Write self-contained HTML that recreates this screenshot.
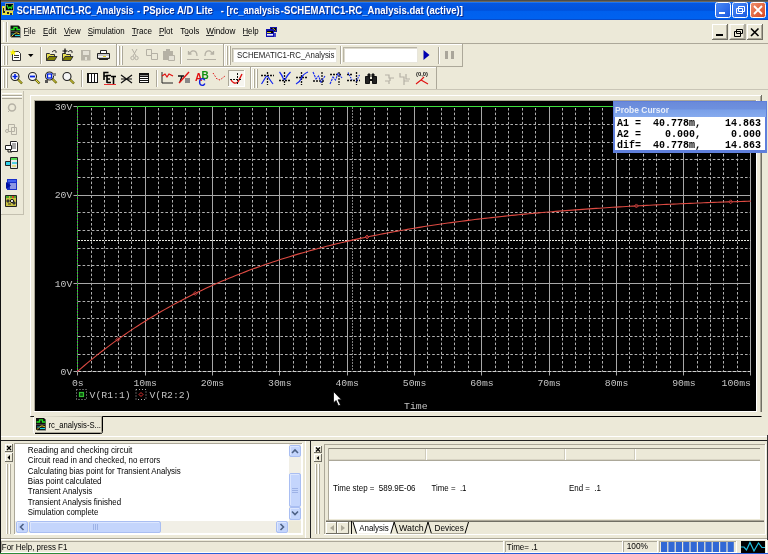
<!DOCTYPE html>
<html><head><meta charset="utf-8"><title>PSpice A/D Lite</title>
<style>html,body{margin:0;padding:0;background:#ECE9D8;overflow:hidden;width:768px;height:554px} svg{display:block;will-change:transform}</style>
</head><body>
<svg width="768" height="554" viewBox="0 0 768 554">
<rect x="0" y="0" width="768" height="554" fill="#ECE9D8" />
<rect x="0" y="0" width="768" height="1" fill="#4C4C4A" />
<rect x="0" y="1" width="768" height="1" fill="#6E665C" />
<defs>
<linearGradient id="tg" x1="0" y1="0" x2="0" y2="1">
<stop offset="0" stop-color="#3088F8"/><stop offset="0.07" stop-color="#0456E2"/>
<stop offset="0.46" stop-color="#0052DC"/><stop offset="0.52" stop-color="#0060EE"/><stop offset="0.92" stop-color="#0062F0"/><stop offset="1" stop-color="#0A40B8"/>
</linearGradient>
<linearGradient id="btn" x1="0" y1="0" x2="1" y2="1">
<stop offset="0" stop-color="#4A8AF6"/><stop offset="1" stop-color="#1A58E0"/></linearGradient>
<linearGradient id="cbtn" x1="0" y1="0" x2="1" y2="1">
<stop offset="0" stop-color="#F0916E"/><stop offset="1" stop-color="#D7451F"/></linearGradient>
<linearGradient id="pc" x1="0" y1="0" x2="0" y2="1">
<stop offset="0" stop-color="#6A8ADA"/><stop offset="0.45" stop-color="#6E90DE"/><stop offset="0.55" stop-color="#7AA0E8"/><stop offset="1" stop-color="#86AAEE"/></linearGradient>
</defs>
<rect x="0" y="2" width="768" height="18" fill="url(#tg)" />
<rect x="0" y="0" width="1" height="554" fill="#111"/>
<rect x="2" y="11" width="11" height="4" fill="#E8E040" />
<rect x="3" y="11" width="2" height="2" fill="#222" />
<rect x="7" y="12" width="2" height="2" fill="#222" />
<rect x="10" y="13" width="2" height="2" fill="#333" />
<rect x="2" y="6" width="3" height="5" fill="#E8E040" />
<rect x="3" y="8" width="1" height="3" fill="#222" />
<rect x="5" y="3" width="9" height="8" fill="#9A9A9A" />
<rect x="6" y="4" width="7" height="6" fill="#000" />
<path d="M7 5 L8.5 8.5 L10 7 L11.5 8.5 L12.5 5" stroke="#22E022" stroke-width="1.2" fill="none"/>
<text x="17.8" y="15.1" font-family="Liberation Sans" font-size="11" font-weight="bold" fill="#0A2A8C" textLength="116.85" lengthAdjust="spacingAndGlyphs"  xml:space="preserve">SCHEMATIC1-RC_Analysis</text>
<text x="16.8" y="14.1" font-family="Liberation Sans" font-size="11" font-weight="bold" fill="#FFF" textLength="116.85" lengthAdjust="spacingAndGlyphs"  xml:space="preserve">SCHEMATIC1-RC_Analysis</text>
<text x="138.1" y="15.1" font-family="Liberation Sans" font-size="11" font-weight="bold" fill="#0A2A8C" textLength="75.8" lengthAdjust="spacingAndGlyphs"  xml:space="preserve">- PSpice A/D Lite</text>
<text x="137.1" y="14.1" font-family="Liberation Sans" font-size="11" font-weight="bold" fill="#FFF" textLength="75.8" lengthAdjust="spacingAndGlyphs"  xml:space="preserve">- PSpice A/D Lite</text>
<text x="221.85" y="15.1" font-family="Liberation Sans" font-size="11" font-weight="bold" fill="#0A2A8C" textLength="59.05" lengthAdjust="spacingAndGlyphs"  xml:space="preserve">- [rc_analysis</text>
<text x="220.85" y="14.1" font-family="Liberation Sans" font-size="11" font-weight="bold" fill="#FFF" textLength="59.05" lengthAdjust="spacingAndGlyphs"  xml:space="preserve">- [rc_analysis</text>
<text x="281.85" y="15.1" font-family="Liberation Sans" font-size="11" font-weight="bold" fill="#0A2A8C" textLength="182.05" lengthAdjust="spacingAndGlyphs"  xml:space="preserve">-SCHEMATIC1-RC_Analysis.dat (active)]</text>
<text x="280.85" y="14.1" font-family="Liberation Sans" font-size="11" font-weight="bold" fill="#FFF" textLength="182.05" lengthAdjust="spacingAndGlyphs"  xml:space="preserve">-SCHEMATIC1-RC_Analysis.dat (active)]</text>
<rect x="715.5" y="2.5" width="15" height="15" rx="2" fill="url(#btn)" stroke="#FFF" stroke-width="1"/>
<rect x="732.5" y="2.5" width="15" height="15" rx="2" fill="url(#btn)" stroke="#FFF" stroke-width="1"/>
<rect x="750.5" y="2.5" width="15" height="15" rx="2" fill="url(#cbtn)" stroke="#FFF" stroke-width="1"/>
<rect x="719" y="12" width="6" height="2" fill="#FFF" />
<path d="M738.5 6.5h6v5h-6z M736.5 8.5h6v5h-6z" stroke="#FFF" stroke-width="1" fill="none"/>
<path d="M754 6 L762 14 M762 6 L754 14" stroke="#FFF" stroke-width="1.8"/>
<rect x="1" y="43" width="767" height="1" fill="#ACA899"/>
<rect x="3" y="22" width="1" height="20" fill="#FFF"/>
<rect x="4" y="22" width="1" height="20" fill="#F4F2E8"/>
<rect x="6" y="22" width="1" height="20" fill="#ACA899"/>
<rect x="7" y="22" width="1" height="20" fill="#FFF"/>
<path d="M11 26h8l2 2v10h-10z" fill="#9A9A90"/>
<path d="M10.5 25.5h8l1.5 1.5v10h-9.5z" fill="#101010"/>
<path d="M11 29.5 h3 v-2.2 h3 v2.2 h3" stroke="#20E020" stroke-width="1.3" fill="none"/>
<rect x="11" y="31" width="9" height="1" fill="#404040"/>
<path d="M15 35.5 h5" stroke="#20D0E0" stroke-width="1.2"/><path d="M11.5 36.5 L14.5 33.5 L16.5 32.8 L19.5 33.8" stroke="#E8D020" stroke-width="1" fill="none"/><path d="M11.5 34 h3" stroke="#20A0B0" stroke-width="1"/>
<text x="23.45" y="34.2" font-family="Liberation Sans" font-size="9" font-weight="normal" fill="#000" textLength="12.35" lengthAdjust="spacingAndGlyphs"  xml:space="preserve">File</text>
<text x="42.95" y="34.2" font-family="Liberation Sans" font-size="9" font-weight="normal" fill="#000" textLength="13.6" lengthAdjust="spacingAndGlyphs"  xml:space="preserve">Edit</text>
<text x="63.95" y="34.2" font-family="Liberation Sans" font-size="9" font-weight="normal" fill="#000" textLength="16.85" lengthAdjust="spacingAndGlyphs"  xml:space="preserve">View</text>
<text x="87.7" y="34.2" font-family="Liberation Sans" font-size="9" font-weight="normal" fill="#000" textLength="36.85" lengthAdjust="spacingAndGlyphs"  xml:space="preserve">Simulation</text>
<text x="131.7" y="34.2" font-family="Liberation Sans" font-size="9" font-weight="normal" fill="#000" textLength="20.35" lengthAdjust="spacingAndGlyphs"  xml:space="preserve">Trace</text>
<text x="158.95" y="34.2" font-family="Liberation Sans" font-size="9" font-weight="normal" fill="#000" textLength="13.85" lengthAdjust="spacingAndGlyphs"  xml:space="preserve">Plot</text>
<text x="180.2" y="34.2" font-family="Liberation Sans" font-size="9" font-weight="normal" fill="#000" textLength="19.1" lengthAdjust="spacingAndGlyphs"  xml:space="preserve">Tools</text>
<text x="206.2" y="34.2" font-family="Liberation Sans" font-size="9" font-weight="normal" fill="#000" textLength="29.1" lengthAdjust="spacingAndGlyphs"  xml:space="preserve">Window</text>
<text x="242.45" y="34.2" font-family="Liberation Sans" font-size="9" font-weight="normal" fill="#000" textLength="16.1" lengthAdjust="spacingAndGlyphs"  xml:space="preserve">Help</text>
<rect x="24" y="35" width="5" height="1" fill="#3A3A3A"/>
<rect x="43" y="35" width="5" height="1" fill="#3A3A3A"/>
<rect x="64" y="35" width="6" height="1" fill="#3A3A3A"/>
<rect x="88" y="35" width="5" height="1" fill="#3A3A3A"/>
<rect x="132" y="35" width="5" height="1" fill="#3A3A3A"/>
<rect x="159" y="35" width="5" height="1" fill="#3A3A3A"/>
<rect x="185" y="35" width="4" height="1" fill="#3A3A3A"/>
<rect x="206" y="35" width="8" height="1" fill="#3A3A3A"/>
<rect x="243" y="35" width="6" height="1" fill="#3A3A3A"/>
<rect x="270" y="27" width="7" height="5" fill="#1414A8" />
<rect x="271" y="28" width="5" height="3" fill="#000" />
<path d="M271 30.5 L273 28.5 L275.5 30.5" stroke="#E8E040" stroke-width="0.9" fill="none"/>
<rect x="266" y="29" width="8" height="8" fill="#1010B0" />
<rect x="267" y="31" width="6" height="2" fill="#000" />
<rect x="267" y="32" width="4" height="1" fill="#D8D040"/>
<rect x="267" y="34" width="6" height="1.6" fill="#F4F4FF" />
<rect x="274" y="33" width="2" height="4" fill="#4848C8" />
<rect x="712" y="24" width="16" height="16" fill="#ECE9D8"/>
<rect x="712" y="24" width="16" height="1" fill="#FFF"/>
<rect x="712" y="24" width="1" height="16" fill="#FFF"/>
<rect x="712" y="39" width="16" height="1" fill="#716F64"/>
<rect x="727" y="24" width="1" height="16" fill="#716F64"/>
<rect x="713" y="38" width="14" height="1" fill="#ACA899"/>
<rect x="726" y="25" width="1" height="14" fill="#ACA899"/>
<rect x="729.5" y="24" width="16" height="16" fill="#ECE9D8"/>
<rect x="729.5" y="24" width="16.0" height="1" fill="#FFF"/>
<rect x="729.5" y="24" width="1" height="16" fill="#FFF"/>
<rect x="729.5" y="39" width="16.0" height="1" fill="#716F64"/>
<rect x="744.5" y="24" width="1" height="16" fill="#716F64"/>
<rect x="730.5" y="38" width="14.0" height="1" fill="#ACA899"/>
<rect x="743.5" y="25" width="1" height="14" fill="#ACA899"/>
<rect x="747" y="24" width="16" height="16" fill="#ECE9D8"/>
<rect x="747" y="24" width="16" height="1" fill="#FFF"/>
<rect x="747" y="24" width="1" height="16" fill="#FFF"/>
<rect x="747" y="39" width="16" height="1" fill="#716F64"/>
<rect x="762" y="24" width="1" height="16" fill="#716F64"/>
<rect x="748" y="38" width="14" height="1" fill="#ACA899"/>
<rect x="761" y="25" width="1" height="14" fill="#ACA899"/>
<rect x="716" y="34" width="7" height="2" fill="#000" />
<path d="M736.5 29.5h6v4h-6z M734.5 31.5h6v5h-6z" stroke="#000" stroke-width="1" fill="#ECE9D8"/>
<path d="M751 28.5 L758.5 36 M758.5 28.5 L751 36" stroke="#000" stroke-width="1.6"/>
<rect x="1" y="44" width="115" height="1" fill="#FFF"/>
<rect x="1" y="44" width="1" height="22" fill="#FFF"/>
<rect x="116" y="44" width="1" height="23" fill="#ACA899"/>
<rect x="1" y="66" width="116" height="1" fill="#ACA899"/>
<rect x="117" y="44" width="106" height="1" fill="#FFF"/>
<rect x="117" y="44" width="1" height="22" fill="#FFF"/>
<rect x="223" y="44" width="1" height="23" fill="#ACA899"/>
<rect x="117" y="66" width="107" height="1" fill="#ACA899"/>
<rect x="224" y="44" width="238" height="1" fill="#FFF"/>
<rect x="224" y="44" width="1" height="22" fill="#FFF"/>
<rect x="462" y="44" width="1" height="23" fill="#ACA899"/>
<rect x="224" y="66" width="239" height="1" fill="#ACA899"/>
<rect x="1" y="67" width="249" height="1" fill="#FFF"/>
<rect x="1" y="67" width="1" height="22" fill="#FFF"/>
<rect x="250" y="67" width="1" height="23" fill="#ACA899"/>
<rect x="1" y="89" width="250" height="1" fill="#ACA899"/>
<rect x="251" y="67" width="185" height="1" fill="#FFF"/>
<rect x="251" y="67" width="1" height="22" fill="#FFF"/>
<rect x="436" y="67" width="1" height="23" fill="#ACA899"/>
<rect x="251" y="89" width="186" height="1" fill="#ACA899"/>
<rect x="1" y="89" width="767" height="1" fill="#C9C5B6"/>
<rect x="3" y="46" width="1" height="19" fill="#FFF"/>
<rect x="4" y="46" width="1" height="19" fill="#ACA899"/>
<rect x="6" y="46" width="1" height="19" fill="#FFF"/>
<rect x="7" y="46" width="1" height="19" fill="#ACA899"/>
<rect x="118" y="46" width="1" height="19" fill="#FFF"/>
<rect x="119" y="46" width="1" height="19" fill="#ACA899"/>
<rect x="121" y="46" width="1" height="19" fill="#FFF"/>
<rect x="122" y="46" width="1" height="19" fill="#ACA899"/>
<rect x="226" y="46" width="1" height="19" fill="#FFF"/>
<rect x="227" y="46" width="1" height="19" fill="#ACA899"/>
<rect x="229" y="46" width="1" height="19" fill="#FFF"/>
<rect x="230" y="46" width="1" height="19" fill="#ACA899"/>
<rect x="3" y="69" width="1" height="19" fill="#FFF"/>
<rect x="4" y="69" width="1" height="19" fill="#ACA899"/>
<rect x="6" y="69" width="1" height="19" fill="#FFF"/>
<rect x="7" y="69" width="1" height="19" fill="#ACA899"/>
<rect x="253" y="69" width="1" height="19" fill="#FFF"/>
<rect x="254" y="69" width="1" height="19" fill="#ACA899"/>
<rect x="256" y="69" width="1" height="19" fill="#FFF"/>
<rect x="257" y="69" width="1" height="19" fill="#ACA899"/>
<rect x="40" y="47" width="1" height="17" fill="#ACA899"/>
<rect x="41" y="47" width="1" height="17" fill="#FFF"/>
<rect x="180" y="47" width="1" height="17" fill="#ACA899"/>
<rect x="181" y="47" width="1" height="17" fill="#FFF"/>
<rect x="438" y="47" width="1" height="17" fill="#ACA899"/>
<rect x="439" y="47" width="1" height="17" fill="#FFF"/>
<rect x="81" y="70" width="1" height="17" fill="#ACA899"/>
<rect x="82" y="70" width="1" height="17" fill="#FFF"/>
<rect x="156" y="70" width="1" height="17" fill="#ACA899"/>
<rect x="157" y="70" width="1" height="17" fill="#FFF"/>
<path d="M12.5 51.5h6l2 2v7h-8z" fill="#FFF" stroke="#333" stroke-width="1"/>
<rect x="14" y="55" width="5" height="1" fill="#333"/>
<rect x="14" y="57" width="5" height="1" fill="#333"/>
<path d="M13 49 L14 51.5 L16.5 51.5 L14.5 53 L15.5 55.5 L13 54 L10.5 55.5 L11.5 53 L9.5 51.5 L12 51.5z" fill="#F8F000"/>
<path d="M28 54h5.5l-2.75 3z" fill="#000"/>
<path d="M46.5 53.5 h3 l1 1 h4 v6 h-8z" fill="#E8E050" stroke="#333" stroke-width="1"/>
<path d="M46.5 60.5 L49 56.5 H57 L54.5 60.5z" fill="#808000" stroke="#333" stroke-width="1"/>
<path d="M52 52 Q54 49.5 56 51 L56 53" stroke="#333" stroke-width="1" fill="none"/>
<path d="M62.5 53.5 h3 l1 1 h4 v6 h-8z" fill="#E8E050" stroke="#333" stroke-width="1"/>
<path d="M62.5 60.5 L65 56.5 H73 L70.5 60.5z" fill="#808000" stroke="#333" stroke-width="1"/>
<path d="M68 52 Q70 49.5 72 51 L72 53" stroke="#333" stroke-width="1" fill="none"/>
<path d="M65 48.5v5 M62.5 51h5" stroke="#000" stroke-width="1.2"/>
<path d="M81 50h9.5v10.5H81z" fill="#B8B4A8"/>
<rect x="83" y="51" width="6" height="4" fill="#E4E1D6" />
<rect x="85" y="57" width="2" height="3" fill="#E4E1D6" />
<path d="M100.5 50.5h6v3h-6z" fill="#FFF" stroke="#222"/>
<path d="M97.5 53.5h12v5h-12z" fill="#C8C8C8" stroke="#222"/>
<rect x="98" y="56" width="11" height="1" fill="#F8F8F8"/>
<rect x="103" y="56" width="3" height="1" fill="#E0D020"/>
<rect x="99" y="59" width="9" height="1" fill="#222"/>
<path d="M132 49 L136 56 M137 49 L133 56" stroke="#B5B1A5" stroke-width="1"/><circle cx="132.5" cy="58" r="1.7" fill="none" stroke="#B5B1A5"/><circle cx="136.5" cy="58" r="1.7" fill="none" stroke="#B5B1A5"/>
<path d="M146.5 49.5h5v6h-5z M151.5 53.5h6v6h-6z" fill="none" stroke="#B5B1A5"/>
<path d="M163 51h10v9h-10z" fill="#B5B1A5"/><path d="M168.5 55.5h6v5h-6z" fill="#E4E1D6" stroke="#B5B1A5"/>
<rect x="166" y="49" width="4" height="2" fill="#B5B1A5" />
<path d="M197 56 Q197 50 192 51 L189 53.5 M188.5 51 v3 h3" stroke="#B5B1A5" stroke-width="1.3" fill="none"/>
<rect x="187" y="59" width="12" height="1" fill="#B5B1A5"/>
<path d="M205 56 Q205 50 210 51 L213 53.5 M213.5 51 v3 h-3" stroke="#B5B1A5" stroke-width="1.3" fill="none"/>
<rect x="204" y="59" width="12" height="1" fill="#B5B1A5"/>
<rect x="232" y="48" width="105" height="15" fill="#FFF" />
<rect x="232" y="48" width="105" height="1" fill="#B9B5A6"/>
<rect x="232" y="48" width="1" height="15" fill="#B9B5A6"/>
<rect x="232" y="62" width="105" height="1" fill="#E8E6DC"/>
<rect x="336" y="48" width="1" height="15" fill="#E8E6DC"/>
<rect x="233" y="49" width="103" height="1" fill="#DEDBCF"/>
<rect x="233" y="49" width="1" height="13" fill="#DEDBCF"/>
<rect x="343" y="47" width="75" height="16" fill="#FFF" />
<rect x="343" y="47" width="75" height="1" fill="#B9B5A6"/>
<rect x="343" y="47" width="1" height="16" fill="#B9B5A6"/>
<rect x="343" y="62" width="75" height="1" fill="#E8E6DC"/>
<rect x="417" y="47" width="1" height="16" fill="#E8E6DC"/>
<rect x="344" y="48" width="73" height="1" fill="#DEDBCF"/>
<rect x="344" y="48" width="1" height="14" fill="#DEDBCF"/>
<rect x="340" y="46" width="1" height="18" fill="#ACA899"/>
<rect x="341" y="46" width="1" height="18" fill="#FFF"/>
<text x="237" y="58.2" font-family="Liberation Sans" font-size="9" font-weight="normal" fill="#222" textLength="97.5" lengthAdjust="spacingAndGlyphs"  xml:space="preserve">SCHEMATIC1-RC_Analysis</text>
<path d="M423.5 50 L429.5 55 L423.5 60z" fill="#0000B0"/>
<rect x="445" y="51" width="3" height="8" fill="#AAA69A" />
<rect x="451" y="51" width="3" height="8" fill="#AAA69A" />
<path d="M17.5 79.0 L22 83.5" stroke="#6A6A10" stroke-width="2.4"/><path d="M18 79.5 L21.5 83.0" stroke="#E8D840" stroke-width="1"/>
<circle cx="15" cy="76.5" r="4" fill="#F4F4F4" stroke="#202020" stroke-width="1.1"/>
<path d="M12.5 76.5h5 M15 74v5" stroke="#0020E0" stroke-width="1.6"/>
<path d="M35.0 79.0 L39.5 83.5" stroke="#6A6A10" stroke-width="2.4"/><path d="M35.5 79.5 L39.0 83.0" stroke="#E8D840" stroke-width="1"/>
<circle cx="32.5" cy="76.5" r="4" fill="#F4F4F4" stroke="#202020" stroke-width="1.1"/>
<path d="M30 76.5h5" stroke="#0020E0" stroke-width="1.8"/>
<path d="M52.0 78.5 L56.5 83" stroke="#6A6A10" stroke-width="2.4"/><path d="M52.5 79 L56.0 82.5" stroke="#E8D840" stroke-width="1"/>
<circle cx="49.5" cy="76" r="4" fill="#F4F4F4" stroke="#202020" stroke-width="1.1"/>
<rect x="47.5" y="74" width="4" height="4" fill="none" stroke="#0020E0" stroke-width="1.3"/>
<rect x="45" y="80" width="3" height="3" fill="#555" />
<rect x="53" y="73" width="3" height="3" fill="#888" />
<path d="M69.5 79.0 L74 83.5" stroke="#6A6A10" stroke-width="2.4"/><path d="M70 79.5 L73.5 83.0" stroke="#E8D840" stroke-width="1"/>
<circle cx="67" cy="76.5" r="4" fill="#F4F4F4" stroke="#202020" stroke-width="1.1"/>
<rect x="87" y="73" width="11" height="10" fill="#111" />
<rect x="89" y="74" width="2" height="8" fill="#FFF" />
<rect x="92" y="74" width="2" height="8" fill="#FFF" />
<rect x="95" y="74" width="2" height="8" fill="#FFF" />
<path d="M104 80V72.5h4.5 M104 76h3 M107 83v-7.5h4 M107 79h3 M107 82.5h4 M111 76.5h5 M113.5 76.5V84" stroke="#000" stroke-width="1.6" fill="none"/>
<rect x="104" y="84" width="12" height="1" fill="#E83030"/>
<path d="M121 75 L132 83 M121 83 L132 75 M121 79h11" stroke="#111" stroke-width="1.2"/>
<rect x="139" y="73" width="10" height="10" fill="#111" />
<rect x="140" y="75" width="8" height="1" fill="#888" />
<rect x="140" y="77" width="8" height="1" fill="#FFF" />
<rect x="140" y="79" width="8" height="1" fill="#FFF" />
<rect x="140" y="81" width="8" height="1" fill="#FFF" />
<path d="M162 72 v11 h11" stroke="#222" stroke-width="1" fill="none"/><path d="M162 76 L165 74 L167 77 L169 74 L173 76" stroke="#E01010" stroke-width="1.2" fill="none"/>
<path d="M178 76h6 M182 76 L180 82" stroke="#111" stroke-width="1.4" fill="none"/><path d="M179 83 L189 72" stroke="#E01010" stroke-width="1.4"/><rect x="185" y="78" width="5" height="5" fill="#888"/>
<text x="195" y="81" font-family="Liberation Sans" font-size="10" font-weight="bold" fill="#E01010"  xml:space="preserve">A</text>
<text x="201.5" y="79" font-family="Liberation Sans" font-size="10" font-weight="bold" fill="#109010"  xml:space="preserve">B</text>
<text x="198.5" y="86" font-family="Liberation Sans" font-size="10" font-weight="bold" fill="#1020E0"  xml:space="preserve">C</text>
<path d="M213 73 L217 79 L220 80 L225 76" stroke="#E01010" stroke-width="1" stroke-dasharray="1.5 1.5" fill="none"/>
<rect x="228" y="70" width="17" height="17" fill="#F6F5EF" />
<rect x="228" y="70" width="17" height="1" fill="#ACA899"/>
<rect x="228" y="70" width="1" height="17" fill="#ACA899"/>
<rect x="228" y="86" width="17" height="1" fill="#FFF"/>
<rect x="244" y="70" width="1" height="17" fill="#FFF"/>
<path d="M231 80 Q234 85 238 82 L242 74" stroke="#E01010" stroke-width="1.4" fill="none"/><path d="M230 79.5h12 M237.5 73v12" stroke="#111" stroke-width="1" stroke-dasharray="2 1"/>
<path d="M261 75.5 H274 M267.5 72 V85" stroke="#111" stroke-width="1.3" stroke-dasharray="2 1"/>
<path d="M261.5 84 Q264 80 265.5 77.5 Q267 75 268.5 77.5 Q270 80 273 84" stroke="#1428F0" stroke-width="1.2" fill="none"/>
<path d="M279 80.5 H291 M284.5 72 V85" stroke="#111" stroke-width="1.3" stroke-dasharray="2 1"/>
<path d="M279.5 72 Q282 75 283 78 Q284.5 81.5 286 78 Q287.5 75 290.5 72" stroke="#1428F0" stroke-width="1.2" fill="none"/>
<path d="M296 77.5 H308 M301.5 72 V85" stroke="#111" stroke-width="1.3" stroke-dasharray="2 1"/>
<path d="M296 84 Q300 82 301.5 78 Q303 74 308 72" stroke="#1428F0" stroke-width="1.2" fill="none"/>
<path d="M313 81 H325 M322 72 V85" stroke="#111" stroke-width="1.3" stroke-dasharray="2 1"/>
<path d="M313 72 L316 79 L318.5 76 L321 82 L325 76" stroke="#1428F0" stroke-width="1.1" fill="none" stroke-dasharray="2.5 0.8"/>
<path d="M330 74.5 H342 M339 72 V85" stroke="#111" stroke-width="1.3" stroke-dasharray="2 1"/>
<path d="M330 84 L333 77 L335.5 80 L338 73.5 L342 78" stroke="#1428F0" stroke-width="1.1" fill="none" stroke-dasharray="2.5 0.8"/>
<path d="M347 74.5 H352 M356.5 72 V85" stroke="#111" stroke-width="1.3" stroke-dasharray="2 1"/>
<path d="M347 80.5 H360 M356.5 72 V72" stroke="#111" stroke-width="1.3" stroke-dasharray="2 1"/>
<path d="M348 72.5 L352 80 M359.5 75 L356 82" stroke="#1428F0" stroke-width="1.1" fill="none" stroke-dasharray="1.5 1"/>
<path d="M365.5 76.5h4v7h-4z M372.5 76.5h4v7h-4z M368 74h2v3h-2z M372 74h2v3h-2z" fill="#222" stroke="#111"/>
<rect x="369" y="79" width="4" height="2" fill="#111" />
<path d="M385 75h4v3h5 M385 81h4v3 M390 78v3" stroke="#B5B1A5" stroke-width="1.2" fill="none"/>
<path d="M400 73v4h4v8 M406 74v5h4 M404 81h5" stroke="#B5B1A5" stroke-width="1.2" fill="none"/>
<text x="416" y="76" font-family="Liberation Sans" font-size="5.5" font-weight="bold" fill="#111" textLength="12" lengthAdjust="spacingAndGlyphs"  xml:space="preserve">(0,0)</text>
<path d="M416 84 L421 80 L428 84 M421 80 L424 77" stroke="#E01010" stroke-width="1.1" fill="none"/>
<rect x="1" y="91" width="1" height="124" fill="#F4F2EA"/>
<rect x="23" y="91" width="1" height="124" fill="#C4C0B0"/>
<rect x="1" y="214" width="23" height="1" fill="#C4C0B0"/>
<rect x="2" y="93" width="20" height="1" fill="#FFF"/>
<rect x="2" y="95" width="20" height="1" fill="#ACA899"/>
<rect x="2" y="96" width="20" height="1" fill="#FFF"/>
<rect x="2" y="98" width="20" height="1" fill="#ACA899"/>
<circle cx="12" cy="107.5" r="3.5" fill="none" stroke="#B5B1A5" stroke-width="1.5"/><path d="M8 112 L10 110" stroke="#B5B1A5"/>
<path d="M8.5 124.5h6v7h-6z M11.5 127.5h5v7h-5z" fill="none" stroke="#B5B1A5"/><circle cx="7" cy="131" r="1.5" fill="none" stroke="#B5B1A5"/>
<path d="M10.5 141.5h6l1 1v9h-7z" fill="#FFF" stroke="#222"/><path d="M12 144h4 M12 146h4 M12 148h4" stroke="#555"/><path d="M5.5 145.5h6v4h-6z" fill="#FFF" stroke="#222"/><path d="M8 150v2h4" stroke="#222" fill="none"/>
<path d="M10.5 157.5h7v11h-7z" fill="#E8E8E8" stroke="#222"/><path d="M11 159h6" stroke="#20D020" stroke-width="1.5"/><path d="M12 163h5" stroke="#20C8E0" stroke-width="1.5"/><path d="M12 166h4" stroke="#E0D020"/><path d="M5.5 161.5h5v4h-5z" fill="#30D0E8" stroke="#222"/>
<path d="M7 179h10v11h-10z" fill="#1A30C8"/><rect x="8" y="180" width="8" height="2" fill="#4060F0"/><path d="M10 184h6 M10 186h6 M10 188h6" stroke="#FFF" stroke-width="1"/><path d="M6 182 L11 185.5 L6 189z" fill="#0010A0"/>
<path d="M5.5 195.5h11v11h-11z" fill="#C8C040" stroke="#222"/><path d="M6 197h3 M10 197h2 M13 197h3" stroke="#20A020" stroke-width="1.5"/><path d="M12 197 h2" stroke="#E02020" stroke-width="1.5"/><path d="M7 200h2v2h-2z M13 202h2v2h-2z M8 204h3" fill="#333" stroke="#333"/><circle cx="12" cy="201" r="1.6" fill="#FFF" stroke="#111"/>
<rect x="30" y="95" width="1" height="322" fill="#FFF"/>
<rect x="30" y="95" width="732" height="1" fill="#FFF"/>
<rect x="761" y="95" width="1" height="322" fill="#716F64"/>
<rect x="30" y="416" width="732" height="1" fill="#716F64"/>
<rect x="760" y="96" width="1" height="320" fill="#ACA899"/>
<rect x="31" y="415" width="730" height="1" fill="#ACA899"/>
<rect x="34" y="100" width="723" height="1" fill="#ACA899"/>
<rect x="34" y="100" width="1" height="312" fill="#ACA899"/>
<rect x="34" y="411" width="723" height="1" fill="#FFF"/>
<rect x="756" y="100" width="1" height="312" fill="#FFF"/>
<rect x="35" y="101" width="721" height="310" fill="#000" />
<line x1="91.5" y1="108.0" x2="91.5" y2="371.5" stroke="#B0B0B0" stroke-width="1" stroke-dasharray="2.6 2"/>
<line x1="104.5" y1="108.0" x2="104.5" y2="371.5" stroke="#B0B0B0" stroke-width="1" stroke-dasharray="2.6 2"/>
<line x1="118.5" y1="108.0" x2="118.5" y2="371.5" stroke="#B0B0B0" stroke-width="1" stroke-dasharray="2.6 2"/>
<line x1="131.5" y1="108.0" x2="131.5" y2="371.5" stroke="#B0B0B0" stroke-width="1" stroke-dasharray="2.6 2"/>
<line x1="158.5" y1="108.0" x2="158.5" y2="371.5" stroke="#B0B0B0" stroke-width="1" stroke-dasharray="2.6 2"/>
<line x1="172.5" y1="108.0" x2="172.5" y2="371.5" stroke="#B0B0B0" stroke-width="1" stroke-dasharray="2.6 2"/>
<line x1="185.5" y1="108.0" x2="185.5" y2="371.5" stroke="#B0B0B0" stroke-width="1" stroke-dasharray="2.6 2"/>
<line x1="199.5" y1="108.0" x2="199.5" y2="371.5" stroke="#B0B0B0" stroke-width="1" stroke-dasharray="2.6 2"/>
<line x1="225.5" y1="108.0" x2="225.5" y2="371.5" stroke="#B0B0B0" stroke-width="1" stroke-dasharray="2.6 2"/>
<line x1="239.5" y1="108.0" x2="239.5" y2="371.5" stroke="#B0B0B0" stroke-width="1" stroke-dasharray="2.6 2"/>
<line x1="252.5" y1="108.0" x2="252.5" y2="371.5" stroke="#B0B0B0" stroke-width="1" stroke-dasharray="2.6 2"/>
<line x1="266.5" y1="108.0" x2="266.5" y2="371.5" stroke="#B0B0B0" stroke-width="1" stroke-dasharray="2.6 2"/>
<line x1="293.5" y1="108.0" x2="293.5" y2="371.5" stroke="#B0B0B0" stroke-width="1" stroke-dasharray="2.6 2"/>
<line x1="306.5" y1="108.0" x2="306.5" y2="371.5" stroke="#B0B0B0" stroke-width="1" stroke-dasharray="2.6 2"/>
<line x1="320.5" y1="108.0" x2="320.5" y2="371.5" stroke="#B0B0B0" stroke-width="1" stroke-dasharray="2.6 2"/>
<line x1="333.5" y1="108.0" x2="333.5" y2="371.5" stroke="#B0B0B0" stroke-width="1" stroke-dasharray="2.6 2"/>
<line x1="360.5" y1="108.0" x2="360.5" y2="371.5" stroke="#B0B0B0" stroke-width="1" stroke-dasharray="2.6 2"/>
<line x1="374.5" y1="108.0" x2="374.5" y2="371.5" stroke="#B0B0B0" stroke-width="1" stroke-dasharray="2.6 2"/>
<line x1="387.5" y1="108.0" x2="387.5" y2="371.5" stroke="#B0B0B0" stroke-width="1" stroke-dasharray="2.6 2"/>
<line x1="400.5" y1="108.0" x2="400.5" y2="371.5" stroke="#B0B0B0" stroke-width="1" stroke-dasharray="2.6 2"/>
<line x1="427.5" y1="108.0" x2="427.5" y2="371.5" stroke="#B0B0B0" stroke-width="1" stroke-dasharray="2.6 2"/>
<line x1="441.5" y1="108.0" x2="441.5" y2="371.5" stroke="#B0B0B0" stroke-width="1" stroke-dasharray="2.6 2"/>
<line x1="454.5" y1="108.0" x2="454.5" y2="371.5" stroke="#B0B0B0" stroke-width="1" stroke-dasharray="2.6 2"/>
<line x1="468.5" y1="108.0" x2="468.5" y2="371.5" stroke="#B0B0B0" stroke-width="1" stroke-dasharray="2.6 2"/>
<line x1="495.5" y1="108.0" x2="495.5" y2="371.5" stroke="#B0B0B0" stroke-width="1" stroke-dasharray="2.6 2"/>
<line x1="508.5" y1="108.0" x2="508.5" y2="371.5" stroke="#B0B0B0" stroke-width="1" stroke-dasharray="2.6 2"/>
<line x1="522.5" y1="108.0" x2="522.5" y2="371.5" stroke="#B0B0B0" stroke-width="1" stroke-dasharray="2.6 2"/>
<line x1="535.5" y1="108.0" x2="535.5" y2="371.5" stroke="#B0B0B0" stroke-width="1" stroke-dasharray="2.6 2"/>
<line x1="562.5" y1="108.0" x2="562.5" y2="371.5" stroke="#B0B0B0" stroke-width="1" stroke-dasharray="2.6 2"/>
<line x1="575.5" y1="108.0" x2="575.5" y2="371.5" stroke="#B0B0B0" stroke-width="1" stroke-dasharray="2.6 2"/>
<line x1="589.5" y1="108.0" x2="589.5" y2="371.5" stroke="#B0B0B0" stroke-width="1" stroke-dasharray="2.6 2"/>
<line x1="602.5" y1="108.0" x2="602.5" y2="371.5" stroke="#B0B0B0" stroke-width="1" stroke-dasharray="2.6 2"/>
<line x1="629.5" y1="108.0" x2="629.5" y2="371.5" stroke="#B0B0B0" stroke-width="1" stroke-dasharray="2.6 2"/>
<line x1="643.5" y1="108.0" x2="643.5" y2="371.5" stroke="#B0B0B0" stroke-width="1" stroke-dasharray="2.6 2"/>
<line x1="656.5" y1="108.0" x2="656.5" y2="371.5" stroke="#B0B0B0" stroke-width="1" stroke-dasharray="2.6 2"/>
<line x1="670.5" y1="108.0" x2="670.5" y2="371.5" stroke="#B0B0B0" stroke-width="1" stroke-dasharray="2.6 2"/>
<line x1="697.5" y1="108.0" x2="697.5" y2="371.5" stroke="#B0B0B0" stroke-width="1" stroke-dasharray="2.6 2"/>
<line x1="710.5" y1="108.0" x2="710.5" y2="371.5" stroke="#B0B0B0" stroke-width="1" stroke-dasharray="2.6 2"/>
<line x1="723.5" y1="108.0" x2="723.5" y2="371.5" stroke="#B0B0B0" stroke-width="1" stroke-dasharray="2.6 2"/>
<line x1="737.5" y1="108.0" x2="737.5" y2="371.5" stroke="#B0B0B0" stroke-width="1" stroke-dasharray="2.6 2"/>
<line x1="78" y1="354.5" x2="750.5" y2="354.5" stroke="#B0B0B0" stroke-width="1" stroke-dasharray="2.6 2"/>
<line x1="78" y1="336.5" x2="750.5" y2="336.5" stroke="#B0B0B0" stroke-width="1" stroke-dasharray="2.6 2"/>
<line x1="78" y1="318.5" x2="750.5" y2="318.5" stroke="#B0B0B0" stroke-width="1" stroke-dasharray="2.6 2"/>
<line x1="78" y1="301.5" x2="750.5" y2="301.5" stroke="#B0B0B0" stroke-width="1" stroke-dasharray="2.6 2"/>
<line x1="78" y1="265.5" x2="750.5" y2="265.5" stroke="#B0B0B0" stroke-width="1" stroke-dasharray="2.6 2"/>
<line x1="78" y1="248.5" x2="750.5" y2="248.5" stroke="#B0B0B0" stroke-width="1" stroke-dasharray="2.6 2"/>
<line x1="78" y1="230.5" x2="750.5" y2="230.5" stroke="#B0B0B0" stroke-width="1" stroke-dasharray="2.6 2"/>
<line x1="78" y1="212.5" x2="750.5" y2="212.5" stroke="#B0B0B0" stroke-width="1" stroke-dasharray="2.6 2"/>
<line x1="78" y1="177.5" x2="750.5" y2="177.5" stroke="#B0B0B0" stroke-width="1" stroke-dasharray="2.6 2"/>
<line x1="78" y1="159.5" x2="750.5" y2="159.5" stroke="#B0B0B0" stroke-width="1" stroke-dasharray="2.6 2"/>
<line x1="78" y1="142.5" x2="750.5" y2="142.5" stroke="#B0B0B0" stroke-width="1" stroke-dasharray="2.6 2"/>
<line x1="78" y1="124.5" x2="750.5" y2="124.5" stroke="#B0B0B0" stroke-width="1" stroke-dasharray="2.6 2"/>
<line x1="145.5" y1="106.5" x2="145.5" y2="375.5" stroke="#A8A8A8" stroke-width="1"/>
<line x1="212.5" y1="106.5" x2="212.5" y2="375.5" stroke="#A8A8A8" stroke-width="1"/>
<line x1="279.5" y1="106.5" x2="279.5" y2="375.5" stroke="#A8A8A8" stroke-width="1"/>
<line x1="347.5" y1="106.5" x2="347.5" y2="375.5" stroke="#A8A8A8" stroke-width="1"/>
<line x1="414.5" y1="106.5" x2="414.5" y2="375.5" stroke="#A8A8A8" stroke-width="1"/>
<line x1="481.5" y1="106.5" x2="481.5" y2="375.5" stroke="#A8A8A8" stroke-width="1"/>
<line x1="549.5" y1="106.5" x2="549.5" y2="375.5" stroke="#A8A8A8" stroke-width="1"/>
<line x1="616.5" y1="106.5" x2="616.5" y2="375.5" stroke="#A8A8A8" stroke-width="1"/>
<line x1="683.5" y1="106.5" x2="683.5" y2="375.5" stroke="#A8A8A8" stroke-width="1"/>
<line x1="750.5" y1="106.5" x2="750.5" y2="375.5" stroke="#A8A8A8" stroke-width="1"/>
<line x1="73.5" y1="283.5" x2="750.5" y2="283.5" stroke="#A8A8A8" stroke-width="1"/>
<line x1="73.5" y1="195.5" x2="750.5" y2="195.5" stroke="#A8A8A8" stroke-width="1"/>
<line x1="77.5" y1="371.5" x2="750.5" y2="371.5" stroke="#D0D0D0" stroke-width="1" stroke-dasharray="4 1"/>
<line x1="77.5" y1="371.5" x2="77.5" y2="375.5" stroke="#A8A8A8" stroke-width="1"/>
<line x1="73.5" y1="371.5" x2="77.5" y2="371.5" stroke="#A8A8A8" stroke-width="1"/>
<line x1="73.5" y1="106.5" x2="77.5" y2="106.5" stroke="#A8A8A8" stroke-width="1"/>
<line x1="77.5" y1="106.5" x2="750.5" y2="106.5" stroke="#3EE03E" stroke-width="1.2"/>
<line x1="77.5" y1="107" x2="77.5" y2="371.5" stroke="#9020A0" stroke-width="1"/>
<line x1="77.5" y1="107" x2="77.5" y2="371.5" stroke="#30D030" stroke-width="1" stroke-dasharray="2 1"/>
<line x1="352.5" y1="107.5" x2="352.5" y2="371.5" stroke="#FFFFFF" stroke-width="1" stroke-dasharray="1 2"/>
<line x1="78" y1="240.5" x2="750.5" y2="240.5" stroke="#E8E8E0" stroke-width="1" stroke-dasharray="2 1"/>
<polyline points="77.40,371.50 80.77,368.58 84.14,365.71 87.50,362.88 90.87,360.11 94.24,357.38 97.61,354.69 100.97,352.05 104.34,349.45 107.71,346.89 111.08,344.38 114.44,341.91 117.81,339.48 121.18,337.09 124.55,334.74 127.91,332.42 131.28,330.15 134.65,327.91 138.02,325.71 141.38,323.55 144.75,321.42 148.12,319.33 151.49,317.27 154.85,315.25 158.22,313.26 161.59,311.30 164.96,309.38 168.32,307.48 171.69,305.62 175.06,303.79 178.43,301.99 181.79,300.22 185.16,298.48 188.53,296.76 191.90,295.08 195.26,293.42 198.63,291.79 202.00,290.19 205.37,288.61 208.73,287.06 212.10,285.54 215.47,284.04 218.84,282.57 222.20,281.12 225.57,279.69 228.94,278.29 232.31,276.91 235.67,275.55 239.04,274.22 242.41,272.91 245.78,271.62 249.14,270.35 252.51,269.10 255.88,267.87 259.25,266.66 262.61,265.48 265.98,264.31 269.35,263.16 272.72,262.03 276.08,260.92 279.45,259.83 282.82,258.76 286.19,257.70 289.55,256.66 292.92,255.64 296.29,254.63 299.66,253.65 303.02,252.67 306.39,251.72 309.76,250.78 313.12,249.85 316.49,248.94 319.86,248.05 323.23,247.17 326.60,246.30 329.96,245.45 333.33,244.62 336.70,243.79 340.07,242.99 343.43,242.19 346.80,241.41 350.17,240.64 353.53,239.88 356.90,239.14 360.27,238.40 363.64,237.68 367.00,236.98 370.37,236.28 373.74,235.59 377.11,234.92 380.48,234.26 383.84,233.61 387.21,232.97 390.58,232.34 393.95,231.72 397.31,231.11 400.68,230.51 404.05,229.92 407.42,229.34 410.78,228.77 414.15,228.21 417.52,227.66 420.88,227.11 424.25,226.58 427.62,226.05 430.99,225.54 434.36,225.03 437.72,224.53 441.09,224.04 444.46,223.56 447.83,223.08 451.19,222.62 454.56,222.16 457.93,221.71 461.30,221.26 464.66,220.83 468.03,220.40 471.40,219.97 474.76,219.56 478.13,219.15 481.50,218.75 484.87,218.35 488.24,217.96 491.60,217.58 494.97,217.21 498.34,216.84 501.71,216.47 505.07,216.12 508.44,215.76 511.81,215.42 515.18,215.08 518.54,214.74 521.91,214.41 525.28,214.09 528.64,213.77 532.01,213.46 535.38,213.15 538.75,212.85 542.12,212.55 545.48,212.26 548.85,211.97 552.22,211.69 555.59,211.41 558.95,211.14 562.32,210.87 565.69,210.60 569.06,210.34 572.42,210.08 575.79,209.83 579.16,209.58 582.52,209.34 585.89,209.10 589.26,208.87 592.63,208.63 596.00,208.41 599.36,208.18 602.73,207.96 606.10,207.74 609.47,207.53 612.83,207.32 616.20,207.11 619.57,206.91 622.94,206.71 626.30,206.52 629.67,206.32 633.04,206.13 636.40,205.95 639.77,205.76 643.14,205.58 646.51,205.41 649.88,205.23 653.24,205.06 656.61,204.89 659.98,204.72 663.35,204.56 666.71,204.40 670.08,204.24 673.45,204.09 676.82,203.93 680.18,203.78 683.55,203.64 686.92,203.49 690.28,203.35 693.65,203.21 697.02,203.07 700.39,202.93 703.75,202.80 707.12,202.67 710.49,202.54 713.86,202.41 717.23,202.29 720.59,202.16 723.96,202.04 727.33,201.92 730.70,201.80 734.06,201.69 737.43,201.58 740.80,201.47 744.16,201.36 747.53,201.25 750.90,201.14" fill="none" stroke="#DC4A42" stroke-width="1.1"/>
<path d="M117.81 337.48 L119.81 339.48 L117.81 341.48 L115.81 339.48z" fill="none" stroke="#D04040" stroke-width="0.9"/>
<path d="M195.26 291.42 L197.26 293.42 L195.26 295.42 L193.26 293.42z" fill="none" stroke="#D04040" stroke-width="0.9"/>
<path d="M367.00 234.98 L369.00 236.98 L367.00 238.98 L365.00 236.98z" fill="none" stroke="#D04040" stroke-width="0.9"/>
<path d="M636.40 203.95 L638.40 205.95 L636.40 207.95 L634.40 205.95z" fill="none" stroke="#D04040" stroke-width="0.9"/>
<path d="M730.70 199.80 L732.70 201.80 L730.70 203.80 L728.70 201.80z" fill="none" stroke="#D04040" stroke-width="0.9"/>
<text x="72.30" y="375.1" font-family="Liberation Mono" font-size="9.8" fill="#C4C4C4" text-anchor="end" xml:space="preserve">0V</text>
<text x="72.30" y="286.77000000000004" font-family="Liberation Mono" font-size="9.8" fill="#C4C4C4" text-anchor="end" xml:space="preserve">10V</text>
<text x="72.30" y="198.44" font-family="Liberation Mono" font-size="9.8" fill="#C4C4C4" text-anchor="end" xml:space="preserve">20V</text>
<text x="72.30" y="110.10999999999999" font-family="Liberation Mono" font-size="9.8" fill="#C4C4C4" text-anchor="end" xml:space="preserve">30V</text>
<text x="77.80" y="386.2" font-family="Liberation Mono" font-size="9.8" fill="#C4C4C4" text-anchor="middle" xml:space="preserve">0s</text>
<text x="145.15" y="386.2" font-family="Liberation Mono" font-size="9.8" fill="#C4C4C4" text-anchor="middle" xml:space="preserve">10ms</text>
<text x="212.50" y="386.2" font-family="Liberation Mono" font-size="9.8" fill="#C4C4C4" text-anchor="middle" xml:space="preserve">20ms</text>
<text x="279.85" y="386.2" font-family="Liberation Mono" font-size="9.8" fill="#C4C4C4" text-anchor="middle" xml:space="preserve">30ms</text>
<text x="347.20" y="386.2" font-family="Liberation Mono" font-size="9.8" fill="#C4C4C4" text-anchor="middle" xml:space="preserve">40ms</text>
<text x="414.55" y="386.2" font-family="Liberation Mono" font-size="9.8" fill="#C4C4C4" text-anchor="middle" xml:space="preserve">50ms</text>
<text x="481.90" y="386.2" font-family="Liberation Mono" font-size="9.8" fill="#C4C4C4" text-anchor="middle" xml:space="preserve">60ms</text>
<text x="549.25" y="386.2" font-family="Liberation Mono" font-size="9.8" fill="#C4C4C4" text-anchor="middle" xml:space="preserve">70ms</text>
<text x="616.60" y="386.2" font-family="Liberation Mono" font-size="9.8" fill="#C4C4C4" text-anchor="middle" xml:space="preserve">80ms</text>
<text x="683.95" y="386.2" font-family="Liberation Mono" font-size="9.8" fill="#C4C4C4" text-anchor="middle" xml:space="preserve">90ms</text>
<text x="751.00" y="386.2" font-family="Liberation Mono" font-size="9.8" fill="#C4C4C4" text-anchor="end" xml:space="preserve">100ms</text>
<text x="404.00" y="408.7" font-family="Liberation Mono" font-size="9.8" fill="#C4C4C4" text-anchor="start" xml:space="preserve">Time</text>
<rect x="76.5" y="389.5" width="10" height="10" fill="none" stroke="#B0B0B0" stroke-width="1" stroke-dasharray="1 2"/>
<rect x="79.5" y="392.5" width="4" height="4" fill="#105010" stroke="#30C030" stroke-width="1.2"/>
<text x="89.60" y="397.6" font-family="Liberation Mono" font-size="9.8" fill="#C4C4C4" text-anchor="start" xml:space="preserve">V(R1:1)</text>
<rect x="136" y="389.5" width="10" height="10" fill="none" stroke="#B0B0B0" stroke-width="1" stroke-dasharray="1 2"/>
<path d="M141 392.5 L143 394.5 L141 396.5 L139 394.5z" fill="none" stroke="#E03030" stroke-width="1"/>
<text x="149.40" y="397.6" font-family="Liberation Mono" font-size="9.8" fill="#C4C4C4" text-anchor="start" xml:space="preserve">V(R2:2)</text>
<path d="M333.5 391.5 L333.5 403 L336 400.5 L338.5 406 L340.5 405 L338 399.8 L341.5 399.8z" fill="#FFF" stroke="#000" stroke-width="0.8"/>
<rect x="613" y="101" width="154" height="52" fill="#5F7FDC" />
<rect x="614" y="102" width="152" height="15" fill="url(#pc)" />
<rect x="615" y="117" width="150" height="33" fill="#FFF" />
<text x="615" y="112.8" font-family="Liberation Sans" font-size="9.5" font-weight="bold" fill="#E8EEFA" textLength="54" lengthAdjust="spacingAndGlyphs"  xml:space="preserve">Probe Cursor</text>
<text x="617" y="125.8" font-family="Liberation Mono" font-size="10" font-weight="bold" fill="#000" xml:space="preserve">A1 =  40.778m,    14.863</text>
<text x="617" y="136.7" font-family="Liberation Mono" font-size="10" font-weight="bold" fill="#000" xml:space="preserve">A2 =    0.000,     0.000</text>
<text x="617" y="148.2" font-family="Liberation Mono" font-size="10" font-weight="bold" fill="#000" xml:space="preserve">dif=  40.778m,    14.863</text>
<rect x="31" y="412" width="731" height="4" fill="#ECE9D8" />
<path d="M33.5 416 V431.5 Q33.5 433.5 35.5 433.5 H100.5 Q102.5 433.5 102.5 431.5 V416.5" fill="#ECE9D8" stroke="none"/>
<path d="M33.5 416.5 V431.5 Q33.5 433.5 35.5 433.5" fill="none" stroke="#FFF" stroke-width="1"/>
<path d="M35 433.5 H100.5 Q102.5 433.5 102.5 431.5 V416.5 H761" fill="none" stroke="#000" stroke-width="1"/>
<rect x="31" y="416" width="3" height="1" fill="#222"/>
<rect x="35" y="432" width="67" height="1" fill="#ACA899"/>
<rect x="101" y="417" width="1" height="15" fill="#ACA899"/>
<rect x="30" y="95" width="1" height="321" fill="#FFF"/>
<path d="M37 419h7l2 2v10h-9z" fill="#9A9A90"/>
<path d="M36 418h8l1.5 1.5v10.5h-9.5z" fill="#101010"/>
<path d="M36.5 422 h3 v-2.2 h3 v2.2 h3" stroke="#20E020" stroke-width="1.3" fill="none"/>
<rect x="36" y="424" width="9" height="1" fill="#404040"/>
<path d="M40 428.5 h5" stroke="#20D0E0" stroke-width="1.2"/><path d="M37 429.5 L40 426.5 L42 425.8 L45 426.8" stroke="#E8D020" stroke-width="1" fill="none"/><path d="M37 427 h3" stroke="#20A0B0" stroke-width="1"/>
<text x="48.5" y="428.2" font-family="Liberation Sans" font-size="9" font-weight="normal" fill="#000" textLength="52.5" lengthAdjust="spacingAndGlyphs"  xml:space="preserve">rc_analysis-S...</text>
<rect x="1" y="436" width="767" height="1" fill="#FFF"/>
<rect x="1" y="440" width="766" height="1" fill="#222"/>
<rect x="767" y="435" width="1" height="105" fill="#333"/>
<rect x="1" y="441" width="766" height="1" fill="#ECE9D8"/>
<rect x="5" y="444" width="8" height="8" fill="#ECE9D8" />
<rect x="5" y="444" width="8" height="1" fill="#FFF"/>
<rect x="5" y="444" width="1" height="8" fill="#FFF"/>
<rect x="5" y="451" width="8" height="1" fill="#716F64"/>
<rect x="12" y="444" width="1" height="8" fill="#716F64"/>
<path d="M7 446 L11 450 M11 446 L7 450" stroke="#000" stroke-width="1.2"/>
<rect x="5" y="453" width="8" height="9" fill="#ECE9D8" />
<rect x="5" y="453" width="8" height="1" fill="#FFF"/>
<rect x="5" y="453" width="1" height="9" fill="#FFF"/>
<rect x="5" y="461" width="8" height="1" fill="#716F64"/>
<rect x="12" y="453" width="1" height="9" fill="#716F64"/>
<path d="M10 455 L7.5 457.5 L10 460z" fill="#000"/>
<rect x="6" y="464" width="1" height="70" fill="#FFF"/>
<rect x="7" y="464" width="1" height="70" fill="#ACA899"/>
<rect x="9" y="464" width="1" height="70" fill="#FFF"/>
<rect x="10" y="464" width="1" height="70" fill="#ACA899"/>
<rect x="14" y="443" width="289" height="1" fill="#ACA899"/>
<rect x="14" y="443" width="1" height="92" fill="#ACA899"/>
<rect x="14" y="534" width="289" height="1" fill="#FFF"/>
<rect x="302" y="443" width="1" height="92" fill="#FFF"/>
<rect x="15" y="444" width="287" height="90" fill="#FFF" />
<text x="27.8" y="452.9" font-family="Liberation Sans" font-size="8.8" font-weight="normal" fill="#000" textLength="104.5" lengthAdjust="spacingAndGlyphs"  xml:space="preserve">Reading and checking circuit</text>
<text x="27.8" y="463.25" font-family="Liberation Sans" font-size="8.8" font-weight="normal" fill="#000" textLength="132.5" lengthAdjust="spacingAndGlyphs"  xml:space="preserve">Circuit read in and checked, no errors</text>
<text x="27.8" y="473.6" font-family="Liberation Sans" font-size="8.8" font-weight="normal" fill="#000" textLength="153.0" lengthAdjust="spacingAndGlyphs"  xml:space="preserve">Calculating bias point for Transient Analysis</text>
<text x="27.8" y="483.95" font-family="Liberation Sans" font-size="8.8" font-weight="normal" fill="#000" textLength="73.8" lengthAdjust="spacingAndGlyphs"  xml:space="preserve">Bias point calculated</text>
<text x="27.8" y="494.3" font-family="Liberation Sans" font-size="8.8" font-weight="normal" fill="#000" textLength="64.5" lengthAdjust="spacingAndGlyphs"  xml:space="preserve">Transient Analysis</text>
<text x="27.8" y="504.65" font-family="Liberation Sans" font-size="8.8" font-weight="normal" fill="#000" textLength="93.3" lengthAdjust="spacingAndGlyphs"  xml:space="preserve">Transient Analysis finished</text>
<text x="27.8" y="515.0" font-family="Liberation Sans" font-size="8.8" font-weight="normal" fill="#000" textLength="70.5" lengthAdjust="spacingAndGlyphs"  xml:space="preserve">Simulation complete</text>
<rect x="289" y="444" width="12" height="77" fill="#F1EFE6" />
<rect x="289.5" y="445.5" width="11" height="11" rx="1.5" fill="#C4D5FC" stroke="#A9BEF2" stroke-width="1"/>
<rect x="290" y="446" width="9" height="1" fill="#DCE6FE"/>
<rect x="290" y="446" width="1" height="9" fill="#DCE6FE"/>
<path d="M292 453 L295 450 L298 453" stroke="#4D6185" stroke-width="1.6" fill="none"/>
<rect x="289.5" y="473.5" width="11" height="33" rx="1.5" fill="#C4D5FC" stroke="#A9BEF2" stroke-width="1"/>
<rect x="290" y="474" width="9" height="1" fill="#DCE6FE"/>
<rect x="290" y="474" width="1" height="31" fill="#DCE6FE"/>
<rect x="292" y="488" width="6" height="1" fill="#9DB2E6"/>
<rect x="292" y="490" width="6" height="1" fill="#9DB2E6"/>
<rect x="292" y="492" width="6" height="1" fill="#9DB2E6"/>
<rect x="289.5" y="507.5" width="11" height="12" rx="1.5" fill="#C4D5FC" stroke="#A9BEF2" stroke-width="1"/>
<rect x="290" y="508" width="9" height="1" fill="#DCE6FE"/>
<rect x="290" y="508" width="1" height="10" fill="#DCE6FE"/>
<path d="M292 511.5 L295 514.5 L298 511.5" stroke="#4D6185" stroke-width="1.6" fill="none"/>
<rect x="15" y="521" width="274" height="12" fill="#F1EFE6" />
<rect x="16.5" y="521.5" width="11" height="11" rx="1.5" fill="#C4D5FC" stroke="#A9BEF2" stroke-width="1"/>
<rect x="17" y="522" width="9" height="1" fill="#DCE6FE"/>
<rect x="17" y="522" width="1" height="9" fill="#DCE6FE"/>
<path d="M23.5 524 L20.5 527 L23.5 530" stroke="#4D6185" stroke-width="1.6" fill="none"/>
<rect x="29.5" y="521.5" width="131" height="11" rx="1.5" fill="#C4D5FC" stroke="#A9BEF2" stroke-width="1"/>
<rect x="30" y="522" width="129" height="1" fill="#DCE6FE"/>
<rect x="30" y="522" width="1" height="9" fill="#DCE6FE"/>
<rect x="93" y="524" width="1" height="6" fill="#9DB2E6"/>
<rect x="95" y="524" width="1" height="6" fill="#9DB2E6"/>
<rect x="97" y="524" width="1" height="6" fill="#9DB2E6"/>
<rect x="276.5" y="521.5" width="11" height="11" rx="1.5" fill="#C4D5FC" stroke="#A9BEF2" stroke-width="1"/>
<rect x="277" y="522" width="9" height="1" fill="#DCE6FE"/>
<rect x="277" y="522" width="1" height="9" fill="#DCE6FE"/>
<path d="M280.5 524 L283.5 527 L280.5 530" stroke="#4D6185" stroke-width="1.6" fill="none"/>
<rect x="289" y="521" width="12" height="12" fill="#ECE9D8" />
<rect x="305" y="441" width="1" height="97" fill="#FFF"/>
<rect x="310" y="441" width="1" height="97" fill="#222"/>
<rect x="314" y="446" width="8" height="7" fill="#ECE9D8" />
<rect x="314" y="446" width="8" height="1" fill="#FFF"/>
<rect x="314" y="446" width="1" height="7" fill="#FFF"/>
<rect x="314" y="452" width="8" height="1" fill="#716F64"/>
<rect x="321" y="446" width="1" height="7" fill="#716F64"/>
<path d="M316 447.5 L320 451.5 M320 447.5 L316 451.5" stroke="#000" stroke-width="1.1"/>
<rect x="314" y="454" width="8" height="8" fill="#ECE9D8" />
<rect x="314" y="454" width="8" height="1" fill="#FFF"/>
<rect x="314" y="454" width="1" height="8" fill="#FFF"/>
<rect x="314" y="461" width="8" height="1" fill="#716F64"/>
<rect x="321" y="454" width="1" height="8" fill="#716F64"/>
<path d="M319 456 L316.5 458 L319 460z" fill="#000"/>
<rect x="315" y="464" width="1" height="70" fill="#FFF"/>
<rect x="316" y="464" width="1" height="70" fill="#ACA899"/>
<rect x="318" y="464" width="1" height="70" fill="#FFF"/>
<rect x="319" y="464" width="1" height="70" fill="#ACA899"/>
<rect x="324" y="444" width="442" height="1" fill="#ACA899"/>
<rect x="324" y="444" width="1" height="91" fill="#ACA899"/>
<rect x="324" y="534" width="442" height="1" fill="#FFF"/>
<rect x="765" y="444" width="1" height="91" fill="#FFF"/>
<rect x="329" y="449" width="431" height="70" fill="#FFF" />
<rect x="329" y="449" width="431" height="11" fill="#ECE9D8" />
<rect x="329" y="448" width="431" height="1" fill="#8E8B7E"/>
<rect x="329" y="460" width="431" height="1" fill="#ACA899"/>
<rect x="329" y="459" width="431" height="1" fill="#D8D4C4"/>
<rect x="425" y="449" width="1" height="11" fill="#CFCBBB"/>
<rect x="426" y="449" width="1" height="11" fill="#FFF"/>
<rect x="564" y="449" width="1" height="11" fill="#CFCBBB"/>
<rect x="565" y="449" width="1" height="11" fill="#FFF"/>
<rect x="634" y="449" width="1" height="11" fill="#CFCBBB"/>
<rect x="635" y="449" width="1" height="11" fill="#FFF"/>
<rect x="328" y="448" width="1" height="73" fill="#ACA899"/>
<rect x="326" y="520" width="438" height="1" fill="#ACA899"/>
<rect x="326" y="521" width="438" height="1" fill="#716F64"/>
<text x="333" y="491.2" font-family="Liberation Sans" font-size="8.8" font-weight="normal" fill="#000" textLength="82.5" lengthAdjust="spacingAndGlyphs"  xml:space="preserve">Time step =  589.9E-06</text>
<text x="431.5" y="491.2" font-family="Liberation Sans" font-size="8.8" font-weight="normal" fill="#000" textLength="35" lengthAdjust="spacingAndGlyphs"  xml:space="preserve">Time =  .1</text>
<text x="569" y="491.2" font-family="Liberation Sans" font-size="8.8" font-weight="normal" fill="#000" textLength="32" lengthAdjust="spacingAndGlyphs"  xml:space="preserve">End =  .1</text>
<rect x="326" y="522" width="439" height="12" fill="#ECE9D8" />
<rect x="326" y="522" width="11" height="12" fill="#ECE9D8" />
<rect x="326" y="522" width="11" height="1" fill="#FFF"/>
<rect x="326" y="522" width="1" height="12" fill="#FFF"/>
<rect x="326" y="533" width="11" height="1" fill="#716F64"/>
<rect x="336" y="522" width="1" height="12" fill="#716F64"/>
<rect x="337" y="522" width="12" height="12" fill="#ECE9D8" />
<rect x="337" y="522" width="12" height="1" fill="#FFF"/>
<rect x="337" y="522" width="1" height="12" fill="#FFF"/>
<rect x="337" y="533" width="12" height="1" fill="#716F64"/>
<rect x="348" y="522" width="1" height="12" fill="#716F64"/>
<path d="M334 525 L330 528 L334 531z" fill="#ACA899"/><path d="M341 525 L345 528 L341 531z" fill="#ACA899"/>
<rect x="351" y="521" width="1" height="13" fill="#111"/>
<path d="M353 522 L356.5 533.5 H390.8 L394.2 522z" fill="#FFF"/>
<path d="M353 522 L356.5 533.5 M390.8 533.5 L394.2 522 L397.6 533.5 M424.6 533.5 L428 522 L431.4 533.5 M465 533.5 L468.5 522" fill="none" stroke="#000" stroke-width="1"/>
<path d="M397.6 533.5 H424.6 M431.4 533.5 H465" stroke="#ACA899" stroke-width="1"/>
<text x="359.2" y="531.2" font-family="Liberation Sans" font-size="8.8" font-weight="normal" fill="#000" textLength="29.5" lengthAdjust="spacingAndGlyphs"  xml:space="preserve">Analysis</text>
<text x="399" y="531.2" font-family="Liberation Sans" font-size="8.8" font-weight="normal" fill="#000" textLength="24.8" lengthAdjust="spacingAndGlyphs"  xml:space="preserve">Watch</text>
<text x="434.6" y="531.2" font-family="Liberation Sans" font-size="8.8" font-weight="normal" fill="#000" textLength="29.2" lengthAdjust="spacingAndGlyphs"  xml:space="preserve">Devices</text>
<rect x="1" y="538" width="766" height="1" fill="#ACA899"/>
<rect x="1" y="539" width="766" height="1" fill="#FFF"/>
<text x="1.8" y="550.2" font-family="Liberation Sans" font-size="8.8" font-weight="normal" fill="#000" textLength="65.5" lengthAdjust="spacingAndGlyphs"  xml:space="preserve">For Help, press F1</text>
<rect x="1" y="541" width="502" height="1" fill="#ACA899"/>
<rect x="1" y="541" width="1" height="11" fill="#ACA899"/>
<rect x="1" y="552" width="502" height="1" fill="#FFF"/>
<rect x="503" y="541" width="1" height="12" fill="#FFF"/>
<rect x="505" y="541" width="117" height="1" fill="#ACA899"/>
<rect x="505" y="541" width="1" height="11" fill="#ACA899"/>
<rect x="505" y="552" width="117" height="1" fill="#FFF"/>
<rect x="622" y="541" width="1" height="12" fill="#FFF"/>
<rect x="623" y="541" width="34" height="1" fill="#ACA899"/>
<rect x="623" y="541" width="1" height="11" fill="#ACA899"/>
<rect x="623" y="552" width="34" height="1" fill="#FFF"/>
<rect x="657" y="541" width="1" height="12" fill="#FFF"/>
<rect x="659" y="541" width="77" height="1" fill="#ACA899"/>
<rect x="659" y="541" width="1" height="11" fill="#ACA899"/>
<rect x="659" y="552" width="77" height="1" fill="#FFF"/>
<rect x="736" y="541" width="1" height="12" fill="#FFF"/>
<text x="506.8" y="549.6" font-family="Liberation Sans" font-size="8.8" font-weight="normal" fill="#000" textLength="31" lengthAdjust="spacingAndGlyphs"  xml:space="preserve">Time= .1</text>
<text x="626.7" y="549.4" font-family="Liberation Sans" font-size="8.8" font-weight="normal" fill="#000" textLength="21.3" lengthAdjust="spacingAndGlyphs"  xml:space="preserve">100%</text>
<rect x="661.0" y="542" width="6.2" height="10" fill="#3168D5" />
<rect x="668.4" y="542" width="6.2" height="10" fill="#3168D5" />
<rect x="675.8" y="542" width="6.2" height="10" fill="#3168D5" />
<rect x="683.2" y="542" width="6.2" height="10" fill="#3168D5" />
<rect x="690.6" y="542" width="6.2" height="10" fill="#3168D5" />
<rect x="698.0" y="542" width="6.2" height="10" fill="#3168D5" />
<rect x="705.4" y="542" width="6.2" height="10" fill="#3168D5" />
<rect x="712.8" y="542" width="6.2" height="10" fill="#3168D5" />
<rect x="720.2" y="542" width="6.2" height="10" fill="#3168D5" />
<rect x="727.6" y="542" width="6.2" height="10" fill="#3168D5" />
<rect x="741" y="541" width="24" height="12" fill="#000" />
<path d="M741 547 H744 L746.5 550 L750 542.5 L754 551 L758.5 543 L762 547.5 H765" stroke="#20C0E0" stroke-width="1.2" fill="none"/>
<rect x="766" y="540" width="1" height="13" fill="#FFF"/>
<rect x="0" y="553" width="70" height="1" fill="#2E8B3A"/>
<rect x="70" y="553" width="698" height="1" fill="#2A5FD8"/>
</svg>
</body></html>
